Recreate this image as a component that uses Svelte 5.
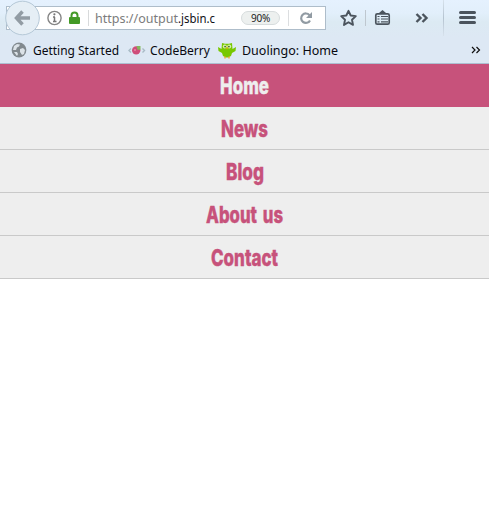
<script>
  const links = [
    { label: 'Home', width: 49, active: true },
    { label: 'News', width: 47 },
    { label: 'Blog', width: 38 },
    { label: 'About us', width: 77 },
    { label: 'Contact', width: 67 }
  ];
</script>

{#snippet fitted(text, width, cls)}
  <svg class="label {cls}" {width} height="20" aria-label={text}>
    <text x="0" y="15" textLength={width} lengthAdjust="spacingAndGlyphs">{text}</text>
  </svg>
{/snippet}

<div class="window">
  <header>
    <div class="toolbar">
      <div class="address">
        <svg class="site" width="84" height="22" viewBox="6 7 84 22" fill="none">
          <circle cx="54.5" cy="18" r="6.6" stroke="#858585" stroke-width="1.4" />
          <path d="M54.5 17v5M53 17h2M53 21.5h3.5" stroke="#777" stroke-width="1.5" />
          <circle cx="54.4" cy="14.3" r="1.1" fill="#777" />
          <path d="M71.5 17.5v-2a3 3 0 0 1 6 0v2" stroke="#439a26" stroke-width="2" />
          <rect x="69" y="17" width="11" height="7" rx="1" fill="#439a26" />
          <path d="M88.5 10v16" stroke="#d8dadb" />
        </svg>
        <svg class="url" width="121" height="20" aria-label="Page address">
          <text x="0" y="15" textLength="83" lengthAdjust="spacingAndGlyphs" fill="#7c7c7c">https://output</text>
          <text x="83" y="15" textLength="37" lengthAdjust="spacingAndGlyphs" fill="#101018">.jsbin.c</text>
        </svg>
        <span class="zoom">90%</span>
        <svg class="reload" width="35" height="20" viewBox="289 8 35 20" fill="none">
          <path d="M289.5 10v16" stroke="#dcdee0" />
          <path d="M310.5 15.2A4.7 4.7 0 1 0 311 20.4" stroke="#919ba3" stroke-width="2.2" />
          <path d="M313 12v6h-6z" fill="#919ba3" />
        </svg>
      </div>
      <svg class="back" width="36" height="36" viewBox="4 0 36 36" fill="none">
        <circle cx="22.5" cy="18" r="16.8" fill="#e5eef5" stroke="#b5c8d7" />
        <path d="M22.5 11.5L16.5 18l6 6.5M17 18h13" stroke="#929ca4" stroke-width="3.5" />
      </svg>
      <svg class="actions" width="163" height="36" viewBox="326 0 163 36" fill="none" stroke="#4b545d">
        <path d="M348.5 10.8l2.2 4.7 5.1.6-3.8 3.6 1 5.2-4.5-2.6-4.5 2.6 1-5.2-3.8-3.6 5.1-.6z" stroke-width="1.9" stroke-linejoin="round" />
        <path d="M365.5 10v16" stroke="#bec7cf" />
        <rect x="375.8" y="13.8" width="13.4" height="10.4" rx="1.5" stroke-width="1.7" />
        <path d="M379 13l3.5-3 3.5 3z" fill="#4b545d" stroke="none" />
        <path d="M377.5 16.5h2M381 16.5h7M377.5 19h2M381 19h7M377.5 21.8h2M381 21.8h7" stroke-width="1.2" />
        <path d="M416.5 14l4 4-4 4M422.5 14l4 4-4 4" stroke-width="2.4" />
        <path d="M443.5 0v36" stroke="url(#divider)" />
        <path d="M460.5 12.5h14M460.5 17.5h14M460.5 22.5h14" stroke-width="3" stroke-linecap="round" />
        <defs>
          <linearGradient id="divider" gradientUnits="userSpaceOnUse" x1="0" y1="0" x2="0" y2="36">
            <stop stop-color="#d7e2ec" /><stop offset=".5" stop-color="#b5c3d0" /><stop offset="1" stop-color="#d7e2ec" />
          </linearGradient>
        </defs>
      </svg>
    </div>
    <div class="bookmarks">
      <svg class="globe" width="16" height="16" viewBox="0 0 16 16">
        <circle cx="8" cy="8" r="7.4" fill="#81898e" />
        <path d="M3 4l3-2 3 .5-1 2-2 1L5 8 2 8zM9 7l3-1 2 2-1 4-2 1-2-3zM3 10l3 0 1 2-1 2z" fill="#dbe2e7" />
      </svg>
      {@render fitted('Getting Started', 86, 'started')}
      <svg class="berry" width="20" height="16" viewBox="0 0 20 16" fill="none">
        <path d="M4 6.5L2 8.5l2 2M15.5 6.5l2 2-2 2" stroke="#a9bbc6" stroke-width="1.4" />
        <circle cx="9.2" cy="8.4" r="4.2" fill="#cf4e7b" />
        <path d="M9.5 4h4v3.7h-3z" fill="#83b95f" />
        <path d="M7 7h2v2H7z" fill="#e17998" />
      </svg>
      {@render fitted('CodeBerry', 60, 'code')}
      <svg class="owl" width="18" height="18" viewBox="0 0 18 18">
        <path d="M4 2l3 .8h4L14 2l.5 6L18 6l-.5 4-3.5 2-1 3-3 1.5H8L5 15l-1-3-3.5-2L0 6l3.5 2z" fill="#78c800" />
        <path d="M7 15.5v2M11 15.5v2" stroke="#f0a521" stroke-width="1.4" />
        <circle cx="6.8" cy="5.5" r="2" fill="#d8f1a6" /><circle cx="11.2" cy="5.5" r="2" fill="#d8f1a6" />
        <circle cx="7.1" cy="5.6" r=".9" fill="#496734" /><circle cx="10.9" cy="5.6" r=".9" fill="#496734" />
        <path d="M7.8 6.5h2.4L9 8.5z" fill="#f5a51b" />
      </svg>
      {@render fitted('Duolingo: Home', 96, 'duo')}
      <svg class="more" width="10" height="10" viewBox="0 0 10 10" fill="none" stroke="#101010" stroke-width="1.2">
        <path d="M1 2l3 3-3 3M5.5 2l3 3-3 3" />
      </svg>
    </div>
  </header>

  <nav>
    {#each links as link}
      <a href="#{link.label}" class:active={link.active}>
        <svg width={link.width + 8} height="42" viewBox="-4 0 {link.width + 8} 42" aria-label={link.label}>
          <text x="0" y="30" textLength={link.width} lengthAdjust="spacingAndGlyphs">{link.label}</text>
        </svg>
      </a>
    {/each}
  </nav>
</div>

<style>
  :global(body) { margin: 0; background: #fff; }
  .window { width: 489px; height: 514px; overflow: hidden; background: #fff; }
  svg { display: block; flex: none; overflow: visible; }
  header {
    box-sizing: border-box;
    height: 64px;
    border-bottom: 1px solid #adbfd1;
    background: linear-gradient(#e5f1fe 0, #e2effb 13px, #dceaf3 22px, #dde8f4 37px, #dde8f4 100%);
    font-family: "Noto Sans", "Open Sans", sans-serif;
  }
  .toolbar { position: relative; display: flex; height: 37px; }
  .address {
    box-sizing: border-box;
    display: flex;
    align-items: center;
    width: 320px;
    height: 24px;
    margin: 6px 0 0 6px;
    border: 1px solid #aebdca;
    background: #fff;
  }
  .site { margin-left: -1px; }
  .url { margin-left: 5px; font-size: 12px; }
  .zoom {
    box-sizing: border-box;
    width: 39px;
    height: 14px;
    margin-left: 25px;
    border: 1px solid #d7dcdd;
    border-radius: 7px;
    background: #edf0ef;
    color: #222;
    font-size: 10px;
    letter-spacing: -.2px;
    line-height: 12px;
    text-align: center;
  }
  .reload { margin-left: 8px; }
  .back { position: absolute; top: 0; left: 4px; }
  .bookmarks { display: flex; align-items: center; height: 26px; }
  .label { font-size: 12px; fill: #080810; }
  .globe { margin-left: 11px; }
  .started { margin-left: 6px; }
  .berry { margin-left: 8px; }
  .code { margin-left: 3px; }
  .owl { margin-left: 8px; }
  .duo { margin-left: 6px; }
  .more { margin-left: 133px; }
  nav { display: flex; flex-direction: column; }
  a {
    box-sizing: border-box;
    display: flex;
    justify-content: center;
    height: 43px;
    border-bottom: 1px solid #c9c9c9;
    background: #eee;
    color: #c7527b;
    text-decoration: none;
  }
  a.active { border-color: #c7527b; background: #c7527b; color: #eee; }
  a text {
    fill: currentColor;
    stroke: currentColor;
    stroke-width: .4px;
    font: 800 23.5px "Inter", "Liberation Sans", sans-serif;
    word-spacing: 3px;
  }
</style>
